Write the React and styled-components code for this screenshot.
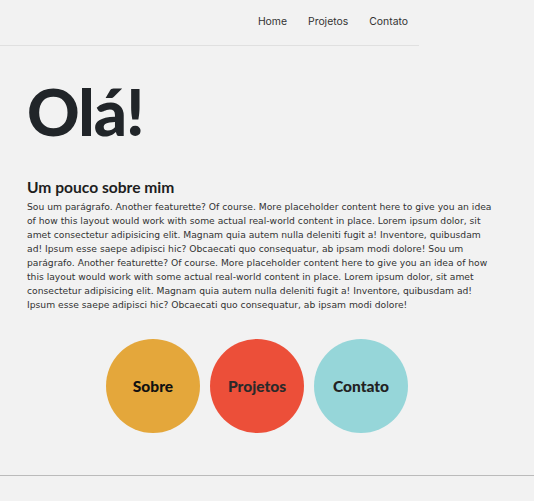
import React from "react";
import styled, { createGlobalStyle } from "styled-components";

const Global = createGlobalStyle`
  html, body { margin: 0; padding: 0; background: #f2f2f2; }
  body { font-family: "DejaVu Sans", "Lato", sans-serif; color: #212529; }
  * { box-sizing: border-box; }
`;

const Page = styled.div`
  width: 534px;
  min-height: 501px;
  display: flex;
  flex-direction: column;
`;

const Header = styled.header`
  width: 419px;
  height: 46px;
  border-bottom: 1px solid #e0e0e0;
  display: flex;
  justify-content: flex-end;
  align-items: center;
  padding-right: 11px;
  gap: 21px;
`;

const NavLink = styled.a`
  font-family: "Inter", "Liberation Sans", sans-serif;
  font-size: 10.4px;
  color: #333;
  text-decoration: none;
  margin-top: -3px;
`;

const Main = styled.main`
  padding: 0 27px;
  flex: 1;
`;

const Title = styled.h1`
  font-family: "Lato", sans-serif;
  font-weight: 900;
  font-size: 65px;
  letter-spacing: -1px;
  margin: 25px 0 0;
  line-height: 80px;
  color: #212529;
`;

const Subtitle = styled.h2`
  font-family: "Lato", sans-serif;
  font-weight: 700;
  font-size: 15.6px;
  margin: 27px 0 4px;
  line-height: 18px;
  color: #1e1e1e;
`;

const Paragraph = styled.p`
  font-family: "DejaVu Sans", sans-serif;
  font-size: 9.2px;
  line-height: 14px;
  margin: 0;
  color: #333;
  max-width: 470px;
`;

const Circles = styled.div`
  display: flex;
  gap: 10px;
  margin: 27px 0 0 79px;
`;

const Circle = styled.a`
  width: 94px;
  height: 94px;
  border-radius: 50%;
  background: ${(p) => p.$bg};
  display: flex;
  align-items: center;
  justify-content: center;
  font-family: "Lato", sans-serif;
  font-weight: 900;
  font-size: 15.5px;
  color: ${(p) => p.$fg};
  text-decoration: none;
`;

const Footer = styled.footer`
  height: 26px;
  margin-top: 42px;
  border-top: 1px solid #bbbbbb;
`;

export default function App() {
  return (
    <Page>
      <Global />
      <Header>
        <NavLink href="#">Home</NavLink>
        <NavLink href="#">Projetos</NavLink>
        <NavLink href="#">Contato</NavLink>
      </Header>
      <Main>
        <Title>Olá!</Title>
        <Subtitle>Um pouco sobre mim</Subtitle>
        <Paragraph>
          Sou um parágrafo. Another featurette? Of course. More placeholder content here to give you an idea
          of how this layout would work with some actual real-world content in place. Lorem ipsum dolor, sit
          amet consectetur adipisicing elit. Magnam quia autem nulla deleniti fugit a! Inventore, quibusdam
          ad! Ipsum esse saepe adipisci hic? Obcaecati quo consequatur, ab ipsam modi dolore! Sou um
          parágrafo. Another featurette? Of course. More placeholder content here to give you an idea of how
          this layout would work with some actual real-world content in place. Lorem ipsum dolor, sit amet
          consectetur adipisicing elit. Magnam quia autem nulla deleniti fugit a! Inventore, quibusdam ad!
          Ipsum esse saepe adipisci hic? Obcaecati quo consequatur, ab ipsam modi dolore!
        </Paragraph>
        <Circles>
          <Circle href="#" $bg="#e4a73b" $fg="#111">Sobre</Circle>
          <Circle href="#" $bg="#ec4f39" $fg="#2a2a2a">Projetos</Circle>
          <Circle href="#" $bg="#96d6d9" $fg="#222">Contato</Circle>
        </Circles>
      </Main>
      <Footer />
    </Page>
  );
}
